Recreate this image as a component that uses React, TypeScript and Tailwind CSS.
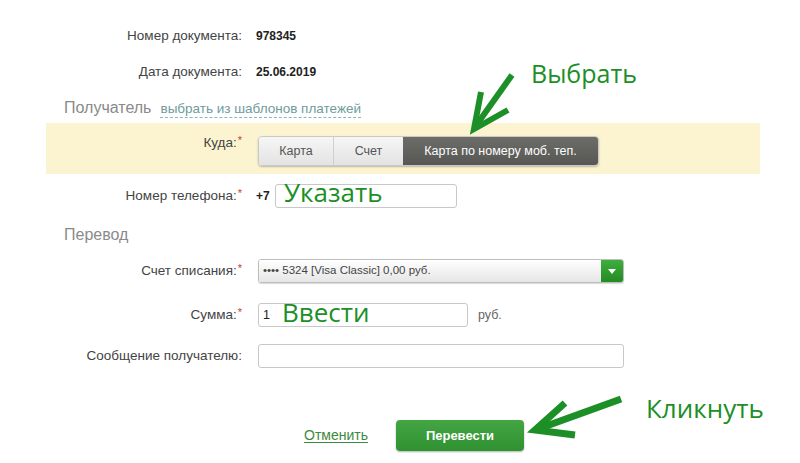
import React from 'react'

const green = '#1c8f27'

function Req() {
  return <sup className="text-[#c83a3a] text-[11px] ml-[1px] top-[-3px]">*</sup>
}

function Row({ label, children, className = '' }: { label: React.ReactNode; children: React.ReactNode; className?: string }) {
  return (
    <div className={`flex items-center ${className}`}>
      <div className="w-[196px] shrink-0 text-right text-[13.5px] text-[#444]">{label}</div>
      <div className="ml-[14px] flex items-center">{children}</div>
    </div>
  )
}

export default function App() {
  return (
    <div className="relative w-[800px] h-[463px] bg-white overflow-hidden" style={{ fontFamily: '"Liberation Sans", Arial, sans-serif' }}>
      <div className="ml-[46px] w-[714px] pt-[27px]">
        <Row label="Номер документа:" className="h-[18px]">
          <span className="text-[12px] font-bold text-[#222]">978345</span>
        </Row>
        <Row label="Дата документа:" className="h-[18px] mt-[18px]">
          <span className="text-[12px] font-bold text-[#222]">25.06.2019</span>
        </Row>

        <div className="mt-[15px] ml-[18px] h-[20px] flex items-baseline">
          <span className="text-[16px] text-[#8a8a8a]">Получатель</span>
          <span className="ml-[9px] text-[13.5px] text-[#6f9c9c] border-b border-dashed border-[#8fb5b5] leading-[16px]">
            выбрать из шаблонов платежей
          </span>
        </div>

        <div className="mt-[7px] h-[51px] bg-[#fcf4d1] pt-[13px] flex items-start">
          <div className="w-[196px] shrink-0 text-right text-[13.5px] text-[#444] leading-[14px]">
            Куда:<Req />
          </div>
          <div className="ml-[16px] flex h-[30px] rounded-[4px] border border-[#c9c9c9] shadow-[0_1px_2px_rgba(0,0,0,0.25)] overflow-hidden text-[12.5px]">
            <div className="w-[75px] flex items-center justify-center text-[#555] bg-gradient-to-b from-[#f6f6f6] to-[#e3e3e3] border-r border-[#cfcfcf]">Карта</div>
            <div className="w-[69px] flex items-center justify-center text-[#555] bg-gradient-to-b from-[#f6f6f6] to-[#e3e3e3]">Счет</div>
            <div className="w-[195px] flex items-center justify-center text-white bg-gradient-to-b from-[#6c6c68] to-[#575754]">Карта по номеру моб. теп.</div>
          </div>
        </div>

        <Row label={<>Номер телефона:<Req /></>} className="mt-[10px] h-[24px]">
          <span className="text-[12px] font-bold text-[#222] mr-[5px]">+7</span>
          <div className="w-[182px] h-[24px] rounded-[3px] border border-[#c8c8c8] bg-white" />
        </Row>

        <div className="mt-[15px] ml-[18px] h-[20px] text-[16px] text-[#8a8a8a]">Перевод</div>

        <Row label={<>Счет списания:<Req /></>} className="mt-[16px] h-[24px]">
          <div className="ml-[2px] w-[366px] h-[24px] flex rounded-[3px] border border-[#bdbdbd] overflow-hidden shadow-[0_1px_1px_rgba(0,0,0,0.15)]">
            <div className="flex-1 flex items-center pl-[4px] text-[11.5px] text-[#444] bg-gradient-to-b from-white to-[#e6e6e6]">
              •••• 5324 [Visa Classic] 0,00 руб.
            </div>
            <div className="w-[22px] flex items-center justify-center bg-gradient-to-b from-[#3fae3f] to-[#228b22]">
              <svg width="8" height="5" viewBox="0 0 8 5"><path d="M0 0h8L4 5z" fill="#fff" /></svg>
            </div>
          </div>
        </Row>

        <Row label={<>Сумма:<Req /></>} className="mt-[20px] h-[24px]">
          <div className="ml-[2px] w-[210px] h-[24px] rounded-[3px] border border-[#c8c8c8] bg-white flex items-center pl-[4px] text-[12.5px] text-[#222]">1</div>
          <span className="ml-[10px] text-[12.5px] text-[#666]">руб.</span>
        </Row>

        <Row label="Сообщение получателю:" className="mt-[17px] h-[24px]">
          <div className="ml-[2px] w-[366px] h-[24px] rounded-[3px] border border-[#c8c8c8] bg-white" />
        </Row>

        <div className="mt-[52px] flex items-center h-[31px]">
          <span className="ml-[258px] text-[14px] text-[#3d8a3d] underline underline-offset-2">Отменить</span>
          <div className="ml-[28px] w-[128px] h-[31px] rounded-[4px] bg-gradient-to-b from-[#43a543] to-[#2f912f] shadow-[0_1px_2px_rgba(0,0,0,0.3)] flex items-center justify-center text-white text-[13px] font-bold">
            Перевести
          </div>
        </div>
      </div>

      {/* annotations */}
      <div className="absolute left-[531px] top-[58px] text-[25px] leading-[30px]" style={{ color: green, fontFamily: '"Open Sans", sans-serif' }}>Выбрать</div>
      <div className="absolute left-[284px] top-[177px] text-[26px] leading-[30px]" style={{ color: green, fontFamily: '"Open Sans", sans-serif' }}>Указать</div>
      <div className="absolute left-[282px] top-[297px] text-[26px] leading-[30px]" style={{ color: green, fontFamily: '"Open Sans", sans-serif' }}>Ввести</div>
      <div className="absolute left-[646px] top-[393px] text-[26px] leading-[30px]" style={{ color: green, fontFamily: '"Open Sans", sans-serif' }}>Кликнуть</div>

      <svg className="absolute left-0 top-0 pointer-events-none" width="800" height="463">
        <g stroke={green} strokeWidth="6" strokeLinecap="butt" fill="none">
          <line x1="512" y1="75" x2="475" y2="127" />
          <polyline points="481,92 474,129 508,110" strokeLinejoin="miter" />
        </g>
        <g stroke={green} strokeWidth="7" strokeLinecap="butt" fill="none">
          <line x1="621" y1="399" x2="538" y2="429" />
          <polyline points="565,403 535,430 575,435" strokeLinejoin="miter" />
        </g>
      </svg>
    </div>
  )
}
